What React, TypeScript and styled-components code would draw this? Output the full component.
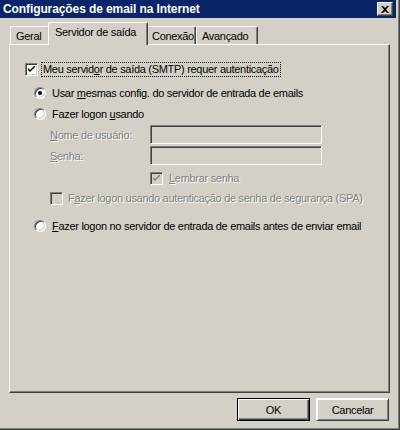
import React from "react";
import styled, { createGlobalStyle } from "styled-components";

const Global = createGlobalStyle`
  html, body { margin: 0; padding: 0; background: #d4d0c8; }
  body { font-family: Tahoma, "Liberation Sans", Arial, sans-serif; font-size: 11px; letter-spacing: -0.3px; color: #000; }
`;

const FACE = "#d4d0c8";

const Window = styled.div`
  width: 400px;
  height: 430px;
  box-sizing: border-box;
  background: ${FACE};
  display: flex;
  flex-direction: column;
  padding: 0 3px 3px 0;
  border-right: 1px solid #404040;
  border-bottom: 1px solid #404040;
  box-shadow: inset -1px -1px 0 #808080;
`;

const TitleBar = styled.div`
  height: 18px;
  background: #0a246a;
  display: flex;
  align-items: center;
  justify-content: space-between;
  padding: 0 3px 0 3px;
`;

const TitleText = styled.span`
  color: #fff;
  font-weight: bold;
  font-size: 12px;
  letter-spacing: -0.1px;
  font-family: Tahoma, "Liberation Sans", Arial, sans-serif;
`;

const CloseButton = styled.div`
  width: 16px;
  height: 14px;
  box-sizing: border-box;
  background: ${FACE};
  border: 1px solid;
  border-color: #fff #404040 #404040 #fff;
  box-shadow: inset -1px -1px 0 #808080;
  display: flex;
  align-items: center;
  justify-content: center;
`;

const Body = styled.div`
  flex: 1;
  display: flex;
  flex-direction: column;
  padding: 4px 6px 0 9px;
`;

const TabRow = styled.div`
  display: flex;
  align-items: flex-end;
  height: 22px;
  padding-left: 1px;
  position: relative;
  z-index: 1;
`;

const Tab = styled.div<{ $w: number; $active?: boolean }>`
  box-sizing: border-box;
  width: ${(p) => p.$w + (p.$active ? 4 : 0)}px;
  height: ${(p) => (p.$active ? 23 : 18)}px;
  margin: 0 ${(p) => (p.$active ? -2 : 0)}px ${(p) => (p.$active ? -1 : 0)}px;
  background: ${FACE};
  border-top: 1px solid #fff;
  border-left: 1px solid #fff;
  border-right: 1px solid #404040;
  box-shadow: inset -1px 0 0 #808080;
  border-radius: 2px 2px 0 0;
  display: flex;
  align-items: ${(p) => (p.$active ? "flex-start" : "center")};
  padding: ${(p) => (p.$active ? "3px 0 0 6px" : "1px 0 0 5px")};
  white-space: nowrap;
  position: relative;
  z-index: ${(p) => (p.$active ? 2 : 0)};
`;

const Panel = styled.div`
  height: 349px;
  box-sizing: border-box;
  width: 381px;
  border-top: 1px solid #fff;
  border-left: 1px solid #fff;
  border-right: 1px solid #404040;
  border-bottom: 1px solid #404040;
  box-shadow: inset -1px -1px 0 #808080;
  display: flex;
  flex-direction: column;
  padding: 17px 0 0 15px;
`;

const Row = styled.div<{ $mt?: number; $indent?: number; $h?: number }>`
  display: flex;
  align-items: center;
  height: ${(p) => p.$h ?? 14}px;
  margin-top: ${(p) => p.$mt ?? 0}px;
  margin-left: ${(p) => p.$indent ?? 0}px;
`;

const Check = styled.span<{ $disabled?: boolean }>`
  width: 13px;
  height: 13px;
  box-sizing: border-box;
  flex: none;
  background: ${(p) => (p.$disabled ? FACE : "#fff")};
  border: 1px solid;
  border-color: #808080 #fff #fff #808080;
  box-shadow: inset 1px 1px 0 #404040, inset -1px -1px 0 ${FACE};
  display: flex;
  align-items: center;
  justify-content: center;
`;

const Radio = styled.span<{ $on?: boolean }>`
  width: 12px;
  height: 12px;
  box-sizing: border-box;
  flex: none;
  border-radius: 50%;
  background: #fff;
  border: 1px solid;
  border-color: #808080 #fff #fff #808080;
  box-shadow: inset 1px 1px 0 #404040, inset -1px -1px 0 ${FACE};
  display: flex;
  align-items: center;
  justify-content: center;
  &::after {
    content: "";
    width: 4px;
    height: 4px;
    border-radius: 50%;
    background: #000;
    display: ${(p) => (p.$on ? "block" : "none")};
  }
`;

const Label = styled.span<{ $gap?: number; $disabled?: boolean; $focus?: boolean }>`
  margin-left: ${(p) => p.$gap ?? 5}px;
  color: ${(p) => (p.$disabled ? "#808080" : "#000")};
  text-shadow: ${(p) => (p.$disabled ? "1px 1px 0 #fff" : "none")};
  white-space: nowrap;
  line-height: 13px;
  padding: 0 1px;
  outline: ${(p) => (p.$focus ? "1px dotted #000" : "none")};
  u { text-decoration: underline; text-underline-offset: 1px; }
`;

const FieldLabel = styled.span`
  width: 100px;
  color: #808080;
  text-shadow: 1px 1px 0 #fff;
  white-space: nowrap;
  u { text-decoration: underline; }
`;

const Input = styled.div`
  width: 172px;
  height: 19px;
  box-sizing: border-box;
  background: ${FACE};
  border: 1px solid;
  border-color: #808080 #fff #fff #808080;
  box-shadow: inset 1px 1px 0 #404040, inset -1px -1px 0 ${FACE};
`;

const Footer = styled.div`
  display: flex;
  justify-content: flex-end;
  gap: 6px;
  padding: 5px 1px 0 0;
`;

const Button = styled.div<{ $default?: boolean }>`
  width: 73px;
  height: 23px;
  box-sizing: border-box;
  display: flex;
  align-items: center;
  justify-content: center;
  background: ${FACE};
  border: 1px solid ${(p) => (p.$default ? "#000" : FACE)};
  box-shadow: ${(p) =>
    p.$default
      ? "inset 1px 1px 0 #fff, inset -1px -1px 0 #404040, inset -2px -2px 0 #808080"
      : "inset 1px 1px 0 #fff, inset -1px -1px 0 #808080"};
  ${(p) => (!p.$default ? "border-color: #fff #404040 #404040 #fff;" : "")}
`;

const Tick = ({ color = "#000" }: { color?: string }) => (
  <svg width="7" height="7" viewBox="0 0 7 7">
    <path d="M0 2 L0 4 L2 6 L7 1 L7 -1 L2 4 Z" fill={color} />
  </svg>
);

export default function App() {
  return (
    <>
      <Global />
      <Window>
        <TitleBar>
          <TitleText>Configurações de email na Internet</TitleText>
          <CloseButton>
            <svg width="8" height="7" viewBox="0 0 8 7">
              <path d="M0 0h2l2 2 2-2h2L5 3.5 8 7H6L4 5 2 7H0l3-3.5z" fill="#000" />
            </svg>
          </CloseButton>
        </TitleBar>
        <Body>
          <TabRow>
            <Tab $w={40}>Geral</Tab>
            <Tab $w={96} $active>Servidor de saída</Tab>
            <Tab $w={50}>Conexão</Tab>
            <Tab $w={62}>Avançado</Tab>
          </TabRow>
          <Panel>
            <Row>
              <Check>
                <Tick />
              </Check>
              <Label $gap={4} $focus>
                Meu servid<u>o</u>r de saída (SMTP) requer autenticação
              </Label>
            </Row>
            <Row $mt={10} $indent={9}>
              <Radio $on />
              <Label>
                Usar <u>m</u>esmas config. do servidor de entrada de emails
              </Label>
            </Row>
            <Row $mt={7} $indent={9}>
              <Radio />
              <Label>
                Fazer logon <u>u</u>sando
              </Label>
            </Row>
            <Row $mt={4} $indent={25} $h={19}>
              <FieldLabel>
                <u>N</u>ome de usuário:
              </FieldLabel>
              <Input />
            </Row>
            <Row $mt={2} $indent={25} $h={19}>
              <FieldLabel>
                <u>S</u>enha:
              </FieldLabel>
              <Input />
            </Row>
            <Row $mt={6} $indent={125}>
              <Check $disabled>
                <Tick color="#808080" />
              </Check>
              <Label $disabled>
                <u>L</u>embrar senha
              </Label>
            </Row>
            <Row $mt={6} $indent={25}>
              <Check $disabled />
              <Label $disabled $gap={4}>
                F<u>a</u>zer logon usando autenticação de senha de segurança (SPA)
              </Label>
            </Row>
            <Row $mt={14} $indent={9}>
              <Radio />
              <Label>
                <u>F</u>azer logon no servidor de entrada de emails antes de enviar email
              </Label>
            </Row>
          </Panel>
          <Footer>
            <Button $default>OK</Button>
            <Button>Cancelar</Button>
          </Footer>
        </Body>
      </Window>
    </>
  );
}
